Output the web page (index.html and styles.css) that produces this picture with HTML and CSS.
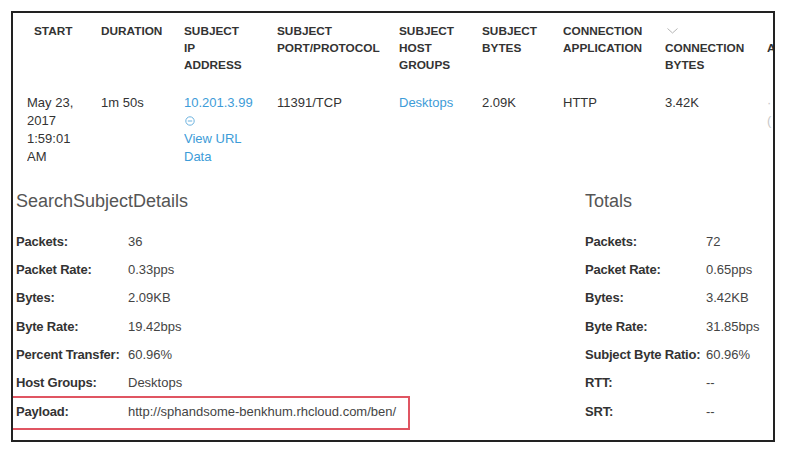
FILE: index.html
```html
<!DOCTYPE html>
<html lang="en">
<head>
<meta charset="utf-8">
<title>Flow details</title>
<link rel="stylesheet" href="styles.css">
</head>
<body>
<div class="frame">
  <table class="flows">
    <colgroup>
      <col class="c-start"><col class="c-dur"><col class="c-ip"><col class="c-port">
      <col class="c-hg"><col class="c-sb"><col class="c-app"><col class="c-cb"><col class="c-more">
    </colgroup>
    <thead>
      <tr>
        <th class="th-start">START</th>
        <th>DURATION</th>
        <th>SUBJECT<br>IP<br>ADDRESS</th>
        <th>SUBJECT<br>PORT/PROTOCOL</th>
        <th>SUBJECT<br>HOST<br>GROUPS</th>
        <th>SUBJECT<br>BYTES</th>
        <th>CONNECTION<br>APPLICATION</th>
        <th><span class="sort"><svg width="11" height="6" viewBox="0 0 11 6"><path d="M0.5 0.5 L5.5 5 L10.5 0.5" fill="none" stroke="#b5b5b5" stroke-width="1"/></svg></span>CONNECTION<br>BYTES</th>
        <th><span class="sort"></span>A</th>
      </tr>
    </thead>
    <tbody>
      <tr>
        <td>May 23,<br>2017<br>1:59:01<br>AM</td>
        <td>1m 50s</td>
        <td><a class="link">10.201.3.99</a><br><span class="minus"><svg width="10" height="10" viewBox="0 0 10 10"><circle cx="5" cy="5" r="4.2" fill="none" stroke="#6db3df" stroke-width="1"/><path d="M2.8 5 H7.2" stroke="#6db3df" stroke-width="1"/></svg></span><br><a class="link">View URL</a><br><a class="link">Data</a></td>
        <td>11391/TCP</td>
        <td><a class="link">Desktops</a></td>
        <td>2.09K</td>
        <td>HTTP</td>
        <td>3.42K</td>
        <td class="faint">&middot;<br>(</td>
      </tr>
    </tbody>
  </table>

  <div class="details">
    <section class="panel panel-subject">
      <h2 class="panel-title">SearchSubjectDetails</h2>
      <div class="row"><span class="label">Packets:</span><span class="value">36</span></div>
      <div class="row"><span class="label">Packet Rate:</span><span class="value">0.33pps</span></div>
      <div class="row"><span class="label">Bytes:</span><span class="value">2.09KB</span></div>
      <div class="row"><span class="label">Byte Rate:</span><span class="value">19.42bps</span></div>
      <div class="row"><span class="label">Percent Transfer:</span><span class="value">60.96%</span></div>
      <div class="row"><span class="label">Host Groups:</span><span class="value">Desktops</span></div>
      <div class="row row-flagged"><span class="label">Payload:</span><span class="value">http://sphandsome-benkhum.rhcloud.com/ben/</span></div>
    </section>
    <section class="panel panel-totals">
      <h2 class="panel-title">Totals</h2>
      <div class="row"><span class="label">Packets:</span><span class="value">72</span></div>
      <div class="row"><span class="label">Packet Rate:</span><span class="value">0.65pps</span></div>
      <div class="row"><span class="label">Bytes:</span><span class="value">3.42KB</span></div>
      <div class="row"><span class="label">Byte Rate:</span><span class="value">31.85bps</span></div>
      <div class="row"><span class="label">Subject Byte Ratio:</span><span class="value">60.96%</span></div>
      <div class="row"><span class="label">RTT:</span><span class="value">--</span></div>
      <div class="row"><span class="label">SRT:</span><span class="value">--</span></div>
    </section>
  </div>
</div>
</body>
</html>
```
FILE: styles.css
```css
html, body {
  margin: 0;
  padding: 0;
  background: #ffffff;
}

body {
  font-family: "Liberation Sans", Arial, sans-serif;
  color: #333333;
}

.frame {
  box-sizing: border-box;
  margin: 11px 0 0 11px;
  width: 764px;
  height: 431px;
  border: 2px solid #222222;
  overflow: hidden;
}

/* flow table */
.flows {
  table-layout: fixed;
  border-collapse: collapse;
  width: 760px;
  margin-left: 14px;
}
.c-start { width: 74px; }
.c-dur { width: 83px; }
.c-ip { width: 93px; }
.c-port { width: 122px; }
.c-hg { width: 83px; }
.c-sb { width: 81px; }
.c-app { width: 102px; }
.c-cb { width: 102px; }
.c-more { width: 20px; }

.flows th {
  text-align: left;
  vertical-align: top;
  font-size: 11.8px;
  font-weight: bold;
  line-height: 17px;
  color: #333333;
  padding: 10px 0 0 0;
  white-space: nowrap;
  overflow: hidden;
}
.flows th.th-start { padding-left: 7px; }

/* sort indicator occupies its own header line */
.sort {
  display: block;
  box-sizing: border-box;
  height: 17px;
  padding: 5px 0 0 2px;
}
.sort svg {
  display: block;
}

.flows td {
  vertical-align: top;
  font-size: 13px;
  line-height: 18px;
  padding: 20px 0 0 0;
  white-space: nowrap;
  overflow: hidden;
}

.link { color: #3d9cd8; }

.minus {
  display: inline-block;
  padding-left: 1px;
  vertical-align: -1px;
}
.minus svg { display: block; }

.faint { color: #c8c8c8; }

/* summary panels */
.details {
  display: flex;
  margin-top: 25px;
}

.panel-subject {
  width: 572px;
}
.panel-totals {
  flex: 1;
}

.panel-title {
  margin: 0 0 16px 0;
  font-size: 18px;
  font-weight: normal;
  line-height: 20px;
  color: #555555;
}
.panel-subject .panel-title { padding-left: 3px; }

.row {
  display: flex;
  align-items: center;
  height: 28.33px;
  font-size: 13px;
}
.panel-subject .row { padding-left: 3px; }

.label {
  font-weight: bold;
  color: #333333;
  letter-spacing: -0.2px;
}
.panel-subject .label { width: 112px; }
.panel-totals .label { width: 121px; }

.value {
  color: #444444;
}

.row-flagged {
  box-sizing: border-box;
  width: 397px;
  height: 34px;
  margin-top: -1px;
  border: 2px solid #e05562;
  border-left: none;
  padding-bottom: 3px;
}
```
